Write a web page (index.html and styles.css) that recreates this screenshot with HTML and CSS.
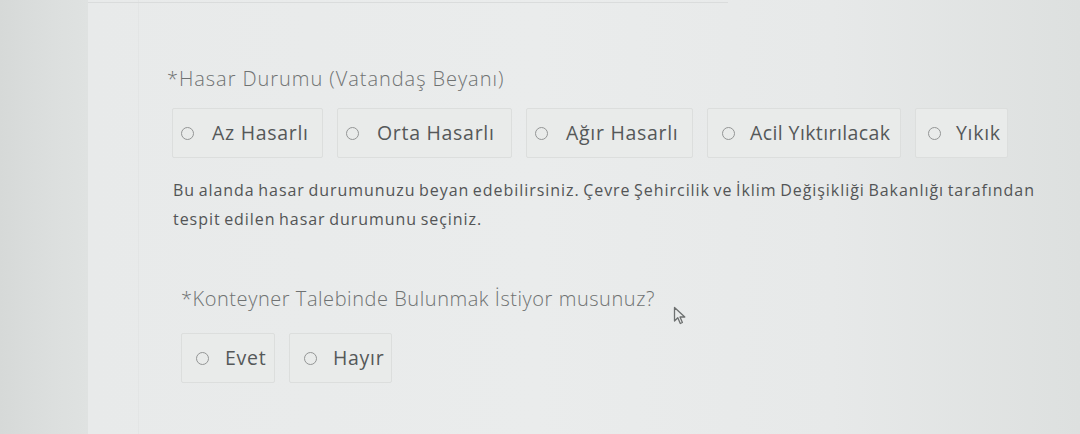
FILE: index.html
```html
<!DOCTYPE html>
<html lang="tr">
<head>
<meta charset="utf-8">
<title>Hasar Durumu</title>
<link rel="stylesheet" href="styles.css">
</head>
<body>
<div class="screen">
  <div class="side"></div>
  <div class="card">
    <div class="prev-line"></div>
    <div class="inner">
      <section class="field first">
        <div class="label">*Hasar Durumu (Vatandaş Beyanı)</div>
        <div class="options">
          <label class="opt w1"><span class="radio"></span><span class="txt">Az Hasarlı</span></label>
          <label class="opt w2"><span class="radio"></span><span class="txt">Orta Hasarlı</span></label>
          <label class="opt w3"><span class="radio"></span><span class="txt">Ağır Hasarlı</span></label>
          <label class="opt w4"><span class="radio"></span><span class="txt">Acil Yıktırılacak</span></label>
          <label class="opt w5"><span class="radio"></span><span class="txt">Yıkık</span></label>
        </div>
        <p class="help">Bu alanda hasar durumunuzu beyan edebilirsiniz. Çevre Şehircilik ve İklim Değişikliği Bakanlığı tarafından<br>tespit edilen hasar durumunu seçiniz.</p>
      </section>
      <section class="field second">
        <div class="label-row">
          <div class="label">*Konteyner Talebinde Bulunmak İstiyor musunuz?</div>
          <svg class="cursor" width="14" height="20" viewBox="0 0 14 20"><path d="M1.5 1.5 L1.5 15 L4.8 11.8 L7.3 17.5 L9.4 16.5 L7 11 L11.8 11 Z" fill="none" stroke="#6d7070" stroke-width="1.3" stroke-linejoin="round"/></svg>
        </div>
        <div class="options">
          <label class="opt w6"><span class="radio"></span><span class="txt">Evet</span></label>
          <label class="opt w7"><span class="radio"></span><span class="txt">Hayır</span></label>
        </div>
      </section>
    </div>
  </div>
</div>
</body>
</html>
```

FILE: styles.css
```css
* { box-sizing: border-box; }
html, body { margin: 0; padding: 0; }
body {
  width: 1080px;
  height: 434px;
  overflow: hidden;
  font-family: "Open Sans", "Noto Sans", sans-serif;
  background: #dadddc;
}
.screen {
  display: flex;
  height: 434px;
}
.side {
  width: 88px;
  flex: none;
  background: linear-gradient(90deg, #d6d9d8 0%, #dcdfde 60%, #dfe2e1 100%);
}
.card {
  flex: 1;
  position: relative;
  background: linear-gradient(90deg, #e8eaea 0%, #eaecec 45%, #e7e9e9 75%, #dde0df 100%);
}
.prev-line {
  position: absolute;
  left: 0;
  top: 2px;
  width: 640px;
  height: 1px;
  background: #dadcdc;
}
.inner {
  margin-left: 50px;
  height: 100%;
  border-left: 1px solid #e3e5e5;
  padding-left: 28px;
  padding-top: 66px;
}
.label {
  font-size: 20px;
  font-weight: 300;
  color: #6f7272;
  line-height: 26px;
  letter-spacing: 0.95px;
}
.options {
  display: flex;
  gap: 14px;
  margin-top: 16px;
}
.opt {
  display: flex;
  align-items: center;
  height: 50px;
  border: 1px solid #dcdedd;
  border-radius: 2px;
  padding-left: 8px;
  background: #e9ebea;
}
.radio {
  width: 13px;
  height: 13px;
  border: 1.6px solid #939595;
  border-radius: 50%;
  flex: none;
}
.txt {
  margin-left: 18px;
  font-size: 19.5px;
  color: #555859;
  letter-spacing: 0.7px;
  line-height: 1;
}
.first .options { margin-left: 5px; }
.w1 { width: 151px; }
.w2 { width: 175px; }
.w3 { width: 167px; }
.w4 { width: 194px; padding-left: 14px; }
.w4 .txt { margin-left: 15px; letter-spacing: 0.4px; }
.w5 { width: 93px; padding-left: 12px; }
.w5 .txt { margin-left: 15px; }
.help {
  margin: 18px 0 0 6px;
  font-size: 16px;
  line-height: 29px;
  color: #535556;
  letter-spacing: 0.95px;
  word-spacing: -1.5px;
  white-space: nowrap;
}
.second {
  margin-top: 52px;
  margin-left: 14px;
}
.second .label { letter-spacing: 0.55px; }
.label-row {
  display: flex;
  align-items: flex-start;
}
.cursor {
  margin-left: 18px;
  margin-top: 20px;
}
.second .options {
  margin-top: 7px;
  margin-left: 0;
}
.w6 { width: 94px; padding-left: 14px; }
.w6 .txt { margin-left: 16px; }
.w7 { width: 103px; padding-left: 14px; }
.w7 .txt { margin-left: 16px; }
```
